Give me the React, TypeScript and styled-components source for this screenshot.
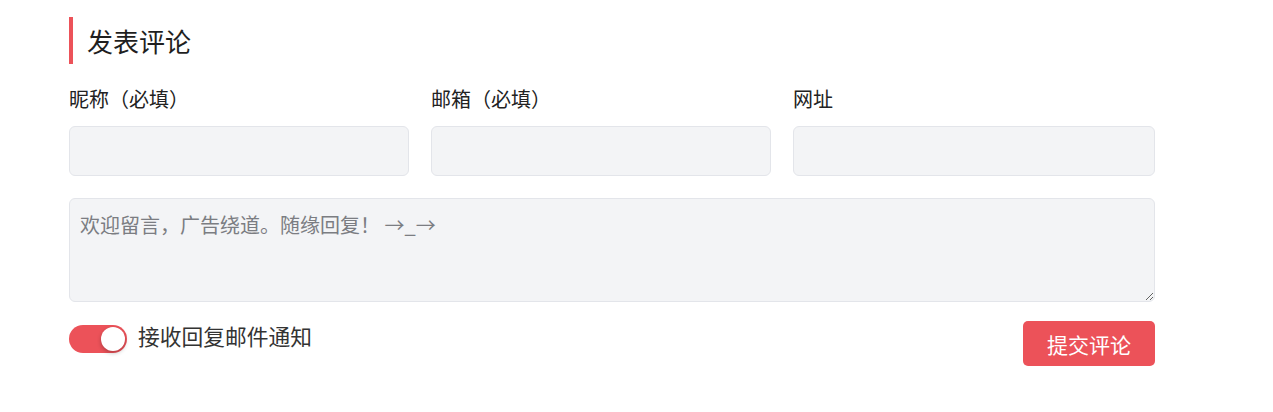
import { useState } from "react";
import styled, { createGlobalStyle } from "styled-components";

const GlobalStyle = createGlobalStyle`
  body {
    margin: 0;
    background: #fff;
    font-family: "Noto Sans CJK SC", "Noto Sans", sans-serif;
    color: #222;
  }
`;

const Wrapper = styled.section`
  width: 1086px;
  padding: 17px 0 0 69px;
`;

const Title = styled.h3`
  margin: 0;
  height: 47px;
  border-left: 4px solid #ec5259;
  padding-left: 14px;
  display: flex;
  align-items: center;
  font-size: 26px;
  font-weight: 400;
  color: #1f1f1f;
`;

const FieldRow = styled.div`
  display: grid;
  grid-template-columns: 340px 340px 1fr;
  column-gap: 22px;
  margin-top: 20px;
`;

const Field = styled.label`
  display: flex;
  flex-direction: column;
`;

const Label = styled.span`
  font-size: 20px;
  line-height: 30px;
  color: #222;
  margin-bottom: 12px;
`;

const Input = styled.input`
  box-sizing: border-box;
  height: 50px;
  width: 100%;
  background: #f3f4f6;
  border: 1px solid #e3e5ea;
  border-radius: 6px;
  outline: none;
  padding: 0 12px;
  font: inherit;
`;

const Comment = styled.textarea`
  box-sizing: border-box;
  display: block;
  width: 100%;
  height: 104px;
  margin-top: 22px;
  background: #f3f4f6;
  border: 1px solid #e3e5ea;
  border-radius: 6px;
  outline: none;
  padding: 12px 10px;
  font-family: "Noto Sans CJK SC", "Noto Sans", sans-serif;
  font-size: 20px;
  line-height: 28px;
  &::placeholder {
    color: #7b7d82;
  }
`;

const Footer = styled.div`
  display: flex;
  align-items: center;
  justify-content: space-between;
  margin-top: 19px;
`;

const Notify = styled.label`
  display: flex;
  align-items: center;
  gap: 11px;
  font-size: 21.75px;
  color: #333;
  margin-top: -10px;
  cursor: pointer;
`;

const NotifyText = styled.span`
  margin-bottom: 6px;
`;

const Track = styled.span<{ $on: boolean }>`
  position: relative;
  width: 58px;
  height: 28px;
  border-radius: 14px;
  background: ${(p) => (p.$on ? "#ec5259" : "#d4d6db")};
  transition: background 0.2s;
`;

const Knob = styled.span<{ $on: boolean }>`
  position: absolute;
  top: 2px;
  left: ${(p) => (p.$on ? "32px" : "2px")};
  width: 24px;
  height: 24px;
  border-radius: 50%;
  background: #fff;
  box-shadow: 0 2px 4px rgba(0, 0, 0, 0.25);
  transition: left 0.2s;
`;

const Submit = styled.button`
  width: 132px;
  height: 45px;
  border: none;
  border-radius: 5px;
  background: #ec5259;
  color: #fff;
  font-family: "Noto Sans CJK SC", sans-serif;
  font-size: 21px;
  cursor: pointer;
`;

export default function App() {
  const [notify, setNotify] = useState(true);

  return (
    <>
      <GlobalStyle />
      <Wrapper>
        <Title>发表评论</Title>
        <FieldRow>
          <Field>
            <Label>昵称（必填）</Label>
            <Input type="text" />
          </Field>
          <Field>
            <Label>邮箱（必填）</Label>
            <Input type="email" />
          </Field>
          <Field>
            <Label>网址</Label>
            <Input type="url" />
          </Field>
        </FieldRow>
        <Comment placeholder="欢迎留言，广告绕道。随缘回复！ →_→" />
        <Footer>
          <Notify onClick={() => setNotify(!notify)}>
            <Track $on={notify}>
              <Knob $on={notify} />
            </Track>
            <NotifyText>接收回复邮件通知</NotifyText>
          </Notify>
          <Submit type="button">提交评论</Submit>
        </Footer>
      </Wrapper>
    </>
  );
}
